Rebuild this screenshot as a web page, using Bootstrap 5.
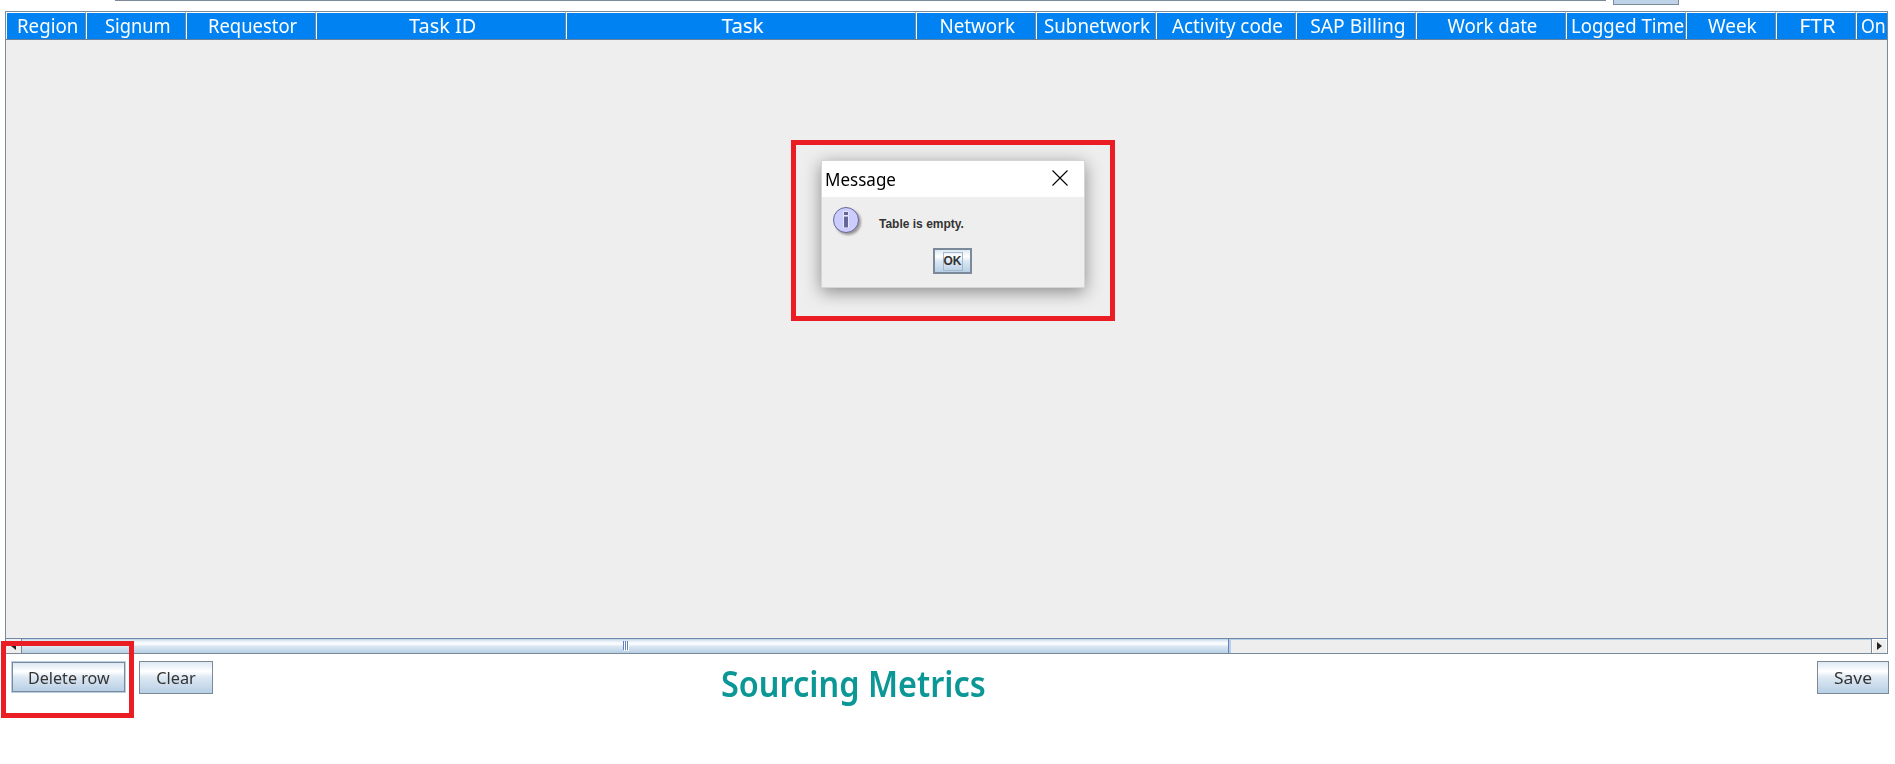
<!DOCTYPE html>
<html lang="en">
<head>
<meta charset="utf-8">
<title>Sourcing Metrics</title>
<link href="https://cdn.jsdelivr.net/npm/bootstrap@5.3.0/dist/css/bootstrap.min.css" rel="stylesheet">
<style>
body{width:1895px;height:764px;overflow:hidden;font-family:"Noto Sans",sans-serif;color:#333;background:#fff;line-height:1}
.top-strip{height:11px;padding-left:115px;gap:7px}
.field-edge{width:1491px;height:1px;background:#7a8a99}
.button-edge{width:66px;height:5px;background:#bfd3e8;border:1px solid #7a8a99;border-top:0}
.grid-pane{margin-left:5px;width:1883px;height:643px;border:1px solid #7a8a99;background:#eee}
.grid-head{height:28px;border-bottom:1px solid #69809a}
.head-cell{flex:none;height:27px;padding:0 0 2px 3px;background:#0082f2;border-top:1px solid #fff;border-left:1px solid #fff;border-right:1px solid #70879c;color:#fff;font-size:20.5px;overflow:hidden}
.head-cell:last-child{border-right:0}
.fit{display:inline-block;white-space:nowrap;flex:none}
.scroll-row{height:15px;border-top:1px solid #6f87a8}
.scroll-arrow{width:16px;height:14px;flex:none;background:#eee;border-right:1px solid #7a8a99}
.scroll-arrow.end{border-right:1px solid #fff;border-left:1px solid #7a8a99;box-shadow:inset 1px 1px #fff}
.scroll-thumb{width:1207px;height:14px;flex:none;border-right:1px solid #6382bf;background:linear-gradient(#b8cfe5 0,#e6eef7 2px,#fff 5px,#dde8f3 7px,#b8cfe5 100%)}
.scroll-track{box-shadow:inset 2px 1px #b8cfe5}
.jbtn{border:1px solid #7a8a99;border-radius:0;padding:2px 0 0;color:#333;background:linear-gradient(#dde8f3 0,#fff 30%,#dde8f3 50%,#b8cfe5 100%);font-size:16.5px;line-height:1;display:flex;align-items:center;justify-content:center}
.jbtn.focused{border-color:#7a8a99;box-shadow:0 0 0 1px #b8cfe5}
.foot-row{padding:7px 6px 0 12px;height:80px}
.metrics-title{font-size:36px;font-weight:600;color:#0b9796;line-height:40px;margin:3px 0 0 508px}
.red-frame{position:absolute;border:5px solid #ea1c24;pointer-events:none}
.msg-dialog{position:absolute;left:821px;top:160px;width:264px;height:128px;border:1px solid #d5d5d5;background:#eee;box-shadow:0 4px 16px rgba(0,0,0,.42)}
.msg-title{height:36px;background:#fff;color:#000;font-size:17.5px;padding:2px 16px 0 3px}
.msg-body{font:bold 12px "Liberation Sans",sans-serif;padding:8px 0 0 10px}
.msg-text{margin:5px 0 0 15px}
.ok-btn{width:39px;height:26px;border:2px solid #7a8a99;font:bold 12px "Liberation Sans",sans-serif;padding:0;margin:11px 0 0 101px}
.ok-btn span{border:1px solid #a3b8cc;padding:2px 0;line-height:13px}
</style>
</head>
<body class="position-relative">
<div class="top-strip d-flex align-items-start"><div class="field-edge"></div><div class="button-edge"></div></div>
<main class="grid-pane d-flex flex-column">
  <div class="grid-head d-flex overflow-hidden" id="head"></div>
  <div class="flex-grow-1"></div>
  <div class="scroll-row d-flex">
    <div class="scroll-arrow d-flex align-items-center justify-content-center"><svg width="5" height="8"><path d="M5 0v8L0 4z" fill="#222"/></svg></div>
    <div class="scroll-thumb d-flex justify-content-center align-items-center"><svg width="6" height="10" shape-rendering="crispEdges" style="margin-left:1px"><path d="M0 0h1v9H0zM2 0h1v9H2zM4 0h1v9H4z" fill="#6382bf"/><path d="M1 1h1v9H1zM3 1h1v9H3zM5 1h1v9H5z" fill="#fff"/></svg></div>
    <div class="scroll-track flex-grow-1"></div>
    <div class="scroll-arrow end d-flex align-items-center justify-content-center"><svg width="5" height="8"><path d="M0 0v8l5-4z" fill="#222"/></svg></div>
  </div>
</main>
<footer class="foot-row d-flex align-items-start">
  <button class="btn jbtn focused" style="width:113px;height:30px;margin-top:1px"><span class="fit" data-w="82">Delete row</span></button>
  <button class="btn jbtn" style="width:74px;height:33px;margin-left:14px"><span class="fit" data-w="39.5">Clear</span></button>
  <h1 class="metrics-title"><span class="fit" data-w="265" data-left="1">Sourcing Metrics</span></h1>
  <button class="btn jbtn ms-auto" style="width:72px;height:33px"><span class="fit" data-w="38">Save</span></button>
</footer>
<div class="red-frame" style="left:1px;top:641px;width:133px;height:77px"></div>
<div class="red-frame" style="left:791px;top:140px;width:324px;height:181px"></div>
<section class="msg-dialog">
  <div class="msg-title d-flex align-items-center justify-content-between"><span class="fit" data-w="71" data-left="1">Message</span><svg width="16" height="16" class="mb-1"><path d="M.5.5l15 15M15.5.5l-15 15" stroke="#000" stroke-width="1.1"/></svg></div>
  <div class="msg-body">
    <div class="d-flex align-items-center">
      <svg width="32" height="32" viewBox="0 0 32 32"><defs><filter id="s" x="-30%" y="-30%" width="160%" height="160%"><feGaussianBlur stdDeviation="1.2"/></filter></defs><circle cx="16" cy="17" r="13" fill="#777" opacity=".7" filter="url(#s)"/><circle cx="14" cy="15" r="12.5" fill="#ccccff" stroke="#666699"/><path d="M11.5 6.5h5v4h-5zM11.5 11h5v12h-5z" fill="#fff"/><path d="M12 7h4v3h-4zM12 11.5h4v11h-4z" fill="#666699"/></svg>
      <span class="fit msg-text" data-w="85" data-left="1">Table is empty.</span>
    </div>
    <button class="btn jbtn ok-btn"><span class="fit">OK</span></button>
  </div>
</section>
<script src="https://cdn.jsdelivr.net/npm/bootstrap@5.3.0/dist/js/bootstrap.bundle.min.js"></script>
<script>
// Column title, column width, label width
const columns = [["Region",80,61],["Signum",100,66],["Requestor",130,89],["Task ID",250,67],["Task",350,42],["Network",120,75],["Subnetwork",120,106],["Activity code",140,111],["SAP Billing",120,95.5],["Work date",150,90],["Logged Time",120,113],["Week",90,49],["FTR",80,36.5],["On",31,25]];
const head = document.getElementById("head");
for (const [name, width, label] of columns) {
  const cell = document.createElement("div");
  cell.className = "head-cell d-flex align-items-center justify-content-center";
  cell.style.width = width + "px";
  cell.innerHTML = `<span class="fit" data-w="${label}">${name}</span>`;
  head.append(cell);
}
// Condense each label to its column's label width
for (const el of document.querySelectorAll("[data-w]")) {
  if (el.dataset.left) el.style.transformOrigin = "left center";
  el.style.transform = `scaleX(${el.dataset.w / el.offsetWidth})`;
}
</script>
</body>
</html>
